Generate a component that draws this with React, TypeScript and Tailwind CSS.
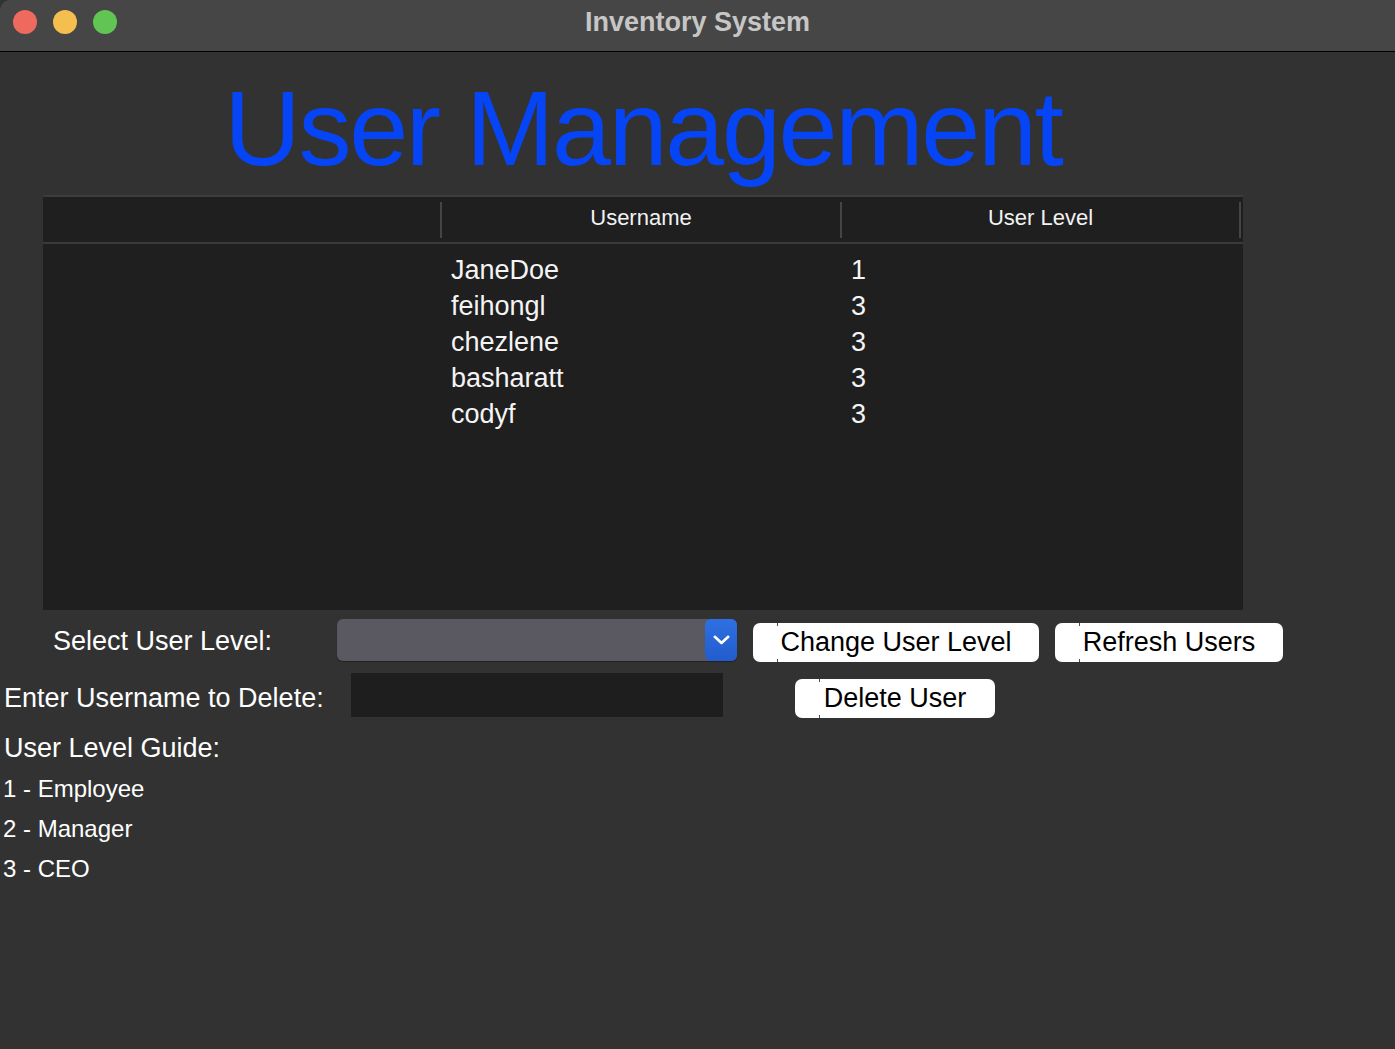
import React from 'react';

const users = [
  { name: 'JaneDoe', level: 1 },
  { name: 'feihongl', level: 3 },
  { name: 'chezlene', level: 3 },
  { name: 'basharatt', level: 3 },
  { name: 'codyf', level: 3 },
];

const MacButton: React.FC<{ label: string; className?: string }> = ({ label, className = '' }) => (
  <button className={`relative h-[39px] rounded-[7px] bg-white text-black text-[27px] leading-none flex items-center justify-center ${className}`}>
    <span className="absolute left-[24px] top-0 w-px h-[3px] bg-black/70" />
    <span className="absolute left-[24px] bottom-0 w-px h-[3px] bg-black/70" />
    {label}
  </button>
);

const App: React.FC = () => {
  return (
    <div className="w-[1395px] h-[1049px] bg-[#323232] flex flex-col overflow-hidden font-['Liberation_Sans',Arial,sans-serif] text-white">
      {/* title bar */}
      <div className="h-[52px] shrink-0 bg-[#464646] border-b border-black grid grid-cols-[1fr_auto_1fr] rounded-tl-[10px]">
        <div className="flex gap-[16px] pl-[13px] pt-[10px]">
          <span className="w-[24px] h-[24px] rounded-full bg-[#ee6a5f]" />
          <span className="w-[24px] h-[24px] rounded-full bg-[#f5bf4f]" />
          <span className="w-[24px] h-[24px] rounded-full bg-[#61c554]" />
        </div>
        <div className="pt-[9px] text-[27px] leading-none font-bold text-[#c6c6c6]">Inventory System</div>
        <div />
      </div>

      {/* heading */}
      <h1 className="ml-[43px] w-[1200px] mt-[23px] h-[106px] text-center text-[106px] leading-none tracking-[-2.3px] text-[#0645f5]">
        User Management
      </h1>

      {/* table */}
      <div className="ml-[43px] w-[1200px] h-[415px] mt-[14px] bg-[#1f1f1f] border-t-2 border-[#3c3c3c] flex flex-col">
        <div className="h-[47px] shrink-0 flex items-center border-b-2 border-[#3a3a3a] text-[22px] text-[#f2f2f2]">
          <div className="w-[397px]" />
          <div className="w-[2px] h-[36px] bg-[#454545]" />
          <div className="w-[398px] text-center pb-[4px]">Username</div>
          <div className="w-[2px] h-[36px] bg-[#454545]" />
          <div className="w-[397px] text-center pb-[4px]">User Level</div>
          <div className="w-[2px] h-[36px] bg-[#454545]" />
        </div>
        <div className="flex-1 pt-[8px] text-[27px] text-[#f4f4f4]">
          {users.map((u) => (
            <div key={u.name} className="h-[36px] flex items-center">
              <div className="w-[408px]" />
              <div className="w-[400px]">{u.name}</div>
              <div>{u.level}</div>
            </div>
          ))}
        </div>
      </div>

      {/* select level row */}
      <div className="mt-[9px] h-[42px] flex items-center text-[27px]">
        <div className="w-[337px] pl-[53px] pt-[3px]">Select User Level:</div>
        <div className="w-[400px] h-[42px] rounded-[6px] bg-[#5a5860] shadow-[0_1px_1px_rgba(0,0,0,0.35)] flex justify-end">
          <div className="w-[32px] h-[42px] rounded-[6px] bg-gradient-to-b from-[#2e70e2] to-[#235ccc] flex items-center justify-center">
            <svg width="17" height="10" viewBox="0 0 17 10" fill="none">
              <polyline points="1.8,1.8 8.5,8 15.2,1.8" stroke="white" strokeWidth="2.6" strokeLinecap="round" strokeLinejoin="round" />
            </svg>
          </div>
        </div>
        <MacButton label="Change User Level" className="w-[286px] ml-[16px] self-start mt-[4px]" />
        <MacButton label="Refresh Users" className="w-[228px] ml-[16px] self-start mt-[4px]" />
      </div>

      {/* delete row */}
      <div className="mt-[12px] h-[45px] flex items-start text-[27px]">
        <div className="w-[351px] pl-[4px] h-[45px] flex items-center pt-[5px]">Enter Username to Delete:</div>
        <div className="w-[372px] h-[44px] bg-[#1e1e1e]" />
        <MacButton label="Delete User" className="w-[200px] ml-[72px] mt-[6px]" />
      </div>

      {/* guide */}
      <div className="mt-[12px] pl-[4px] text-[27px] leading-[36px]">User Level Guide:</div>
      <div className="mt-[3px] pl-[3px] text-[24px] leading-[40px]">
        <div>1 - Employee</div>
        <div>2 - Manager</div>
        <div>3 - CEO</div>
      </div>
    </div>
  );
};

export default App;
